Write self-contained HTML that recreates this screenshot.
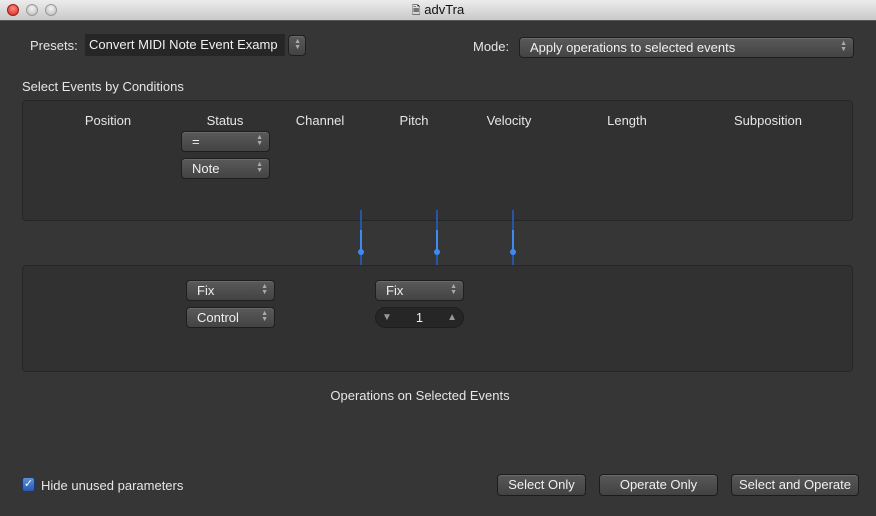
<!DOCTYPE html>
<html><head><meta charset="utf-8"><style>
*{box-sizing:border-box;margin:0;padding:0}
body{width:876px;height:516px;background:#363636;font-family:"Liberation Sans",sans-serif;font-size:13px;color:#e6e6e6;position:relative;overflow:hidden}
.a{position:absolute}
.title{left:0;top:0;width:876px;height:21px;background:linear-gradient(#ececec,#c9c9c9);border-bottom:1px solid #555;text-align:center;color:#111;font-size:13px;line-height:19px}
.dot{top:4px;width:12px;height:12px;border-radius:50%;background:radial-gradient(circle at 50% 35%,#f4f4f4,#b8b8b8);border:1px solid #999}
.pop{height:21px;border-radius:4px;background:linear-gradient(#5a5a5a,#434343);border:1px solid #1e1e1e;box-shadow:inset 0 1px 0 #6a6a6a;color:#f0f0f0;line-height:19px;padding-left:10px}
.arr{position:absolute;right:6px;top:3px;font-size:7px;line-height:6px;color:#aaa;text-align:center}
.panel{background:#313131;border:1px solid #262626;border-radius:4px}
.hd{top:113px;color:#e6e6e6;text-align:center;width:100px}
.btn{top:474px;height:22px;border-radius:4px;background:linear-gradient(#585858,#424242);border:1px solid #1c1c1c;box-shadow:inset 0 1px 0 #6a6a6a;text-align:center;line-height:20px;color:#f0f0f0}
.vl{width:2px;background:#2856a0;top:210px;height:62px}
.vl i{position:absolute;left:0;top:20px;width:2px;height:22px;background:#3d8af0}
.vl b{position:absolute;left:-2px;top:39px;width:6px;height:6px;border-radius:50%;background:#3d8af0}
</style></head><body>
<div class="a title"><span style="font-size:11px">🗎</span> advTra</div>
<div class="a dot" style="left:7px;background:radial-gradient(circle at 50% 35%,#ff8a80,#d0261c);border-color:#a01c14"></div>
<div class="a dot" style="left:26px"></div>
<div class="a dot" style="left:45px"></div>

<div class="a" style="left:30px;top:38px">Presets:</div>
<div class="a" style="left:85px;top:34px;width:200px;height:22px;background:#262626;padding-left:4px;line-height:22px;color:#f0f0f0;white-space:nowrap;overflow:hidden">Convert MIDI Note Event Examp</div>
<div class="a pop" style="left:288px;top:35px;width:18px;padding:0"><div class="arr" style="right:4px">▲<br>▼</div></div>

<div class="a" style="left:473px;top:39px">Mode:</div>
<div class="a pop" style="left:519px;top:37px;width:335px">Apply operations to selected events<div class="arr">▲<br>▼</div></div>

<div class="a" style="left:22px;top:79px">Select Events by Conditions</div>
<div class="a panel" style="left:22px;top:100px;width:831px;height:121px"></div>
<div class="a hd" style="left:58px">Position</div>
<div class="a hd" style="left:175px">Status</div>
<div class="a hd" style="left:270px">Channel</div>
<div class="a hd" style="left:364px">Pitch</div>
<div class="a hd" style="left:459px">Velocity</div>
<div class="a hd" style="left:577px">Length</div>
<div class="a hd" style="left:718px">Subposition</div>
<div class="a pop" style="left:181px;top:131px;width:89px">=<div class="arr">▲<br>▼</div></div>
<div class="a pop" style="left:181px;top:158px;width:89px">Note<div class="arr">▲<br>▼</div></div>

<div class="a vl" style="left:360px"><i></i><b></b></div>
<div class="a vl" style="left:436px"><i></i><b></b></div>
<div class="a vl" style="left:512px"><i></i><b></b></div>

<div class="a panel" style="left:22px;top:265px;width:831px;height:107px"></div>
<div class="a pop" style="left:186px;top:280px;width:89px">Fix<div class="arr">▲<br>▼</div></div>
<div class="a pop" style="left:186px;top:307px;width:89px">Control<div class="arr">▲<br>▼</div></div>
<div class="a pop" style="left:375px;top:280px;width:89px">Fix<div class="arr">▲<br>▼</div></div>
<div class="a" style="left:375px;top:307px;width:89px;height:21px;border-radius:11px;background:#262626;border:1px solid #1e1e1e;text-align:center;line-height:20px;color:#f0f0f0">1
<span class="a" style="left:6px;top:0;font-size:10px;color:#999">▼</span><span class="a" style="right:6px;top:0;font-size:10px;color:#999">▲</span></div>

<div class="a" style="left:0;width:840px;top:388px;text-align:center">Operations on Selected Events</div>

<div class="a" style="left:22px;top:477px;width:13px;height:15px;border-radius:3px;background:linear-gradient(#5c8fd8,#2a5ab0);border:1px solid #1a3a70;color:#fff;font-size:11px;line-height:13px;text-align:center">✓</div>
<div class="a" style="left:41px;top:478px">Hide unused parameters</div>

<div class="a btn" style="left:497px;width:89px">Select Only</div>
<div class="a btn" style="left:599px;width:119px">Operate Only</div>
<div class="a btn" style="left:731px;width:128px">Select and Operate</div>
</body></html>
